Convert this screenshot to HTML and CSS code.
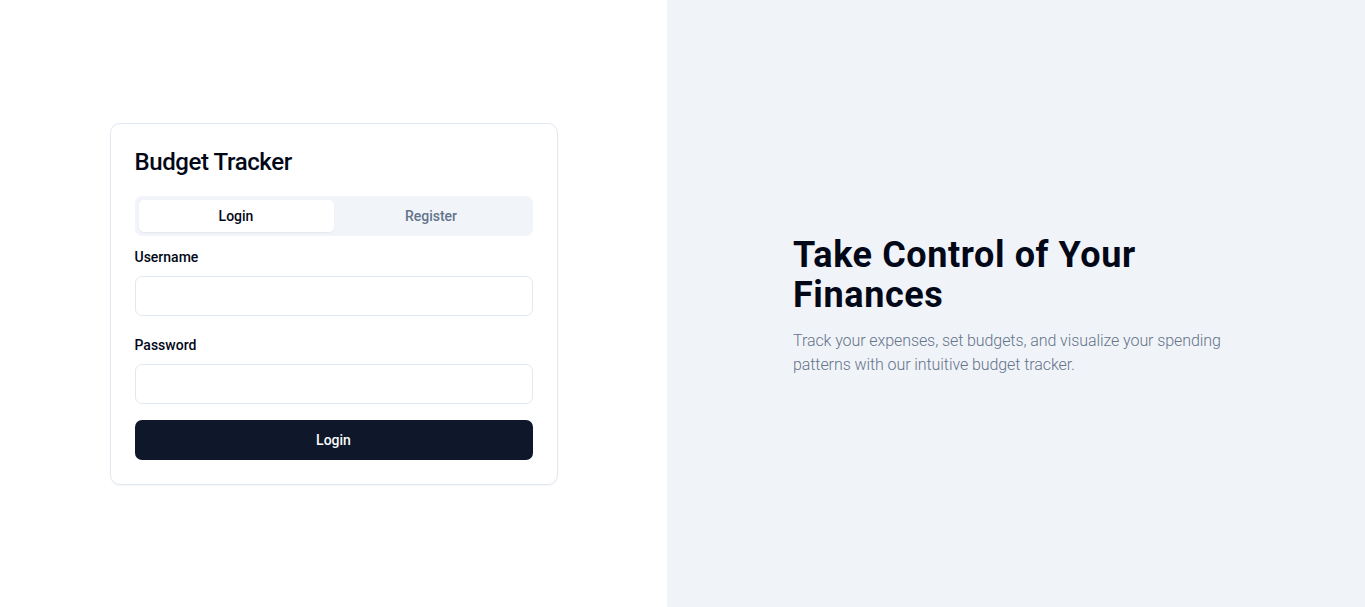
FILE: index.html
```html
<!DOCTYPE html>
<html lang="en">
<head>
<meta charset="utf-8">
<title>Budget Tracker</title>
<link rel="stylesheet" href="styles.css">
</head>
<body>
<div class="page">
  <main class="left">
    <div class="card">
      <h1 class="title">Budget Tracker</h1>
      <div class="tabs">
        <button class="tab active">Login</button>
        <button class="tab">Register</button>
      </div>
      <form class="form">
        <div class="field">
          <label class="label" for="u">Username</label>
          <input class="input" id="u" type="text">
        </div>
        <div class="field">
          <label class="label" for="p">Password</label>
          <input class="input" id="p" type="password">
        </div>
        <button class="submit" type="button">Login</button>
      </form>
    </div>
  </main>
  <aside class="right">
    <div class="hero">
      <h2 class="hero-title">Take Control of Your Finances</h2>
      <p class="hero-text">Track your expenses, set budgets, and visualize your spending patterns with our intuitive budget tracker.</p>
    </div>
  </aside>
</div>
</body>
</html>
```

FILE: styles.css
```css
* { box-sizing: border-box; }
html, body { margin: 0; padding: 0; }
body {
  font-family: "Segoe UI", Roboto, "Noto Sans", sans-serif;
  color: #020817;
  background: #ffffff;
}
.page {
  display: flex;
  height: 607px;
}
.left {
  width: 667px;
  flex: none;
  display: flex;
  align-items: center;
  justify-content: center;
  padding-top: 1px;
}
.card {
  width: 448px;
  border: 1px solid #e2e8f0;
  border-radius: 10px;
  background: #fff;
  padding: 24px 24px 24px;
  box-shadow: 0 1px 2px rgba(0,0,0,0.04);
}
.title {
  margin: 0;
  font-size: 24px;
  line-height: 29px;
  font-weight: 500;
  letter-spacing: -0.4px;
}
.tabs {
  margin-top: 19px;
  display: grid;
  grid-template-columns: 1fr 1fr;
  background: #f1f5f9;
  border-radius: 7px;
  padding: 4px;
  height: 40px;
}
.tab {
  border: 0;
  background: transparent;
  font-family: inherit;
  font-size: 14px;
  font-weight: 500;
  color: #64748b;
  border-radius: 5px;
  padding: 0;
  height: 32px;
}
.tab.active {
  background: #fff;
  color: #020817;
  box-shadow: 0 1px 2px rgba(0,0,0,0.06);
}
.form {
  margin-top: 11px;
  display: flex;
  flex-direction: column;
}
.field {
  display: flex;
  flex-direction: column;
  gap: 9px;
  margin-bottom: 19px;
}
.field + .field { margin-bottom: 16px; }
.label {
  font-size: 14px;
  line-height: 20px;
  font-weight: 500;
  color: #020817;
}
.input {
  height: 40px;
  border: 1px solid #e2e8f0;
  border-radius: 7px;
  background: #fff;
  font-family: inherit;
  font-size: 14px;
  padding: 0 12px;
  outline: none;
}
.submit {
  height: 40px;
  border: 0;
  border-radius: 7px;
  background: #0f172a;
  color: #f8fafc;
  font-family: inherit;
  font-size: 14px;
  font-weight: 500;
}
.right {
  flex: 1;
  background: #f0f3f8;
  display: flex;
  align-items: center;
  justify-content: center;
  padding-left: 2px;
}
.hero {
  width: 448px;
  margin-top: 4px;
}
.hero-title {
  margin: 0 0 14px;
  font-size: 36px;
  line-height: 40px;
  font-weight: 700;
  letter-spacing: 0.6px;
  color: #020817;
}
.hero-text {
  margin: 0;
  font-size: 16px;
  line-height: 24px;
  font-weight: 300;
  letter-spacing: -0.08px;
  color: #64748b;
}
```
